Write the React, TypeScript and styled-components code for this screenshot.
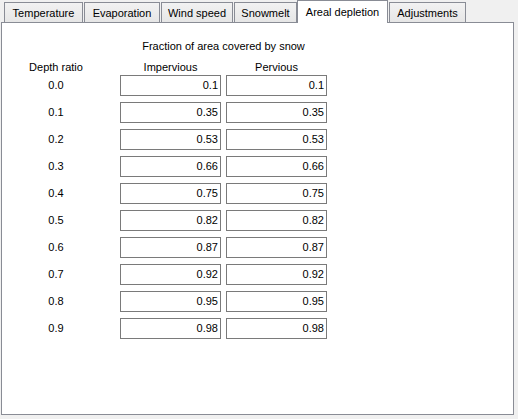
import React from 'react';
import styled, { createGlobalStyle } from 'styled-components';

const depletion = [
  { ratio: '0.0', impervious: '0.1', pervious: '0.1' },
  { ratio: '0.1', impervious: '0.35', pervious: '0.35' },
  { ratio: '0.2', impervious: '0.53', pervious: '0.53' },
  { ratio: '0.3', impervious: '0.66', pervious: '0.66' },
  { ratio: '0.4', impervious: '0.75', pervious: '0.75' },
  { ratio: '0.5', impervious: '0.82', pervious: '0.82' },
  { ratio: '0.6', impervious: '0.87', pervious: '0.87' },
  { ratio: '0.7', impervious: '0.92', pervious: '0.92' },
  { ratio: '0.8', impervious: '0.95', pervious: '0.95' },
  { ratio: '0.9', impervious: '0.98', pervious: '0.98' },
];

const tabs = [
  { label: 'Temperature', width: 79 },
  { label: 'Evaporation', width: 76 },
  { label: 'Wind speed', width: 72 },
  { label: 'Snowmelt', width: 63 },
  { label: 'Areal depletion', width: 91, active: true },
  { label: 'Adjustments', width: 77 },
];

export default function App() {
  return (
    <>
      <GlobalStyle />
      <Window>
        <TabRow>
          {tabs.map((t) => (
            <Tab key={t.label} $width={t.width} $active={!!t.active}>
              {t.label}
            </Tab>
          ))}
        </TabRow>
        <Panel>
          <Columns>
            <Title>Fraction of area covered by snow</Title>
          </Columns>
          <HeaderRow>
            <RatioLabel>Depth ratio</RatioLabel>
            <ColumnLabel>Impervious</ColumnLabel>
            <ColumnLabel>Pervious</ColumnLabel>
          </HeaderRow>
          <Rows>
            {depletion.map((row) => (
              <React.Fragment key={row.ratio}>
                <RatioLabel $boxed>{row.ratio}</RatioLabel>
                <ValueBox>{row.impervious}</ValueBox>
                <ValueBox>{row.pervious}</ValueBox>
              </React.Fragment>
            ))}
          </Rows>
        </Panel>
      </Window>
    </>
  );
}

const GlobalStyle = createGlobalStyle`
  html, body {
    margin: 0;
    padding: 0;
    background: #f0f0f0;
  }
  body {
    font-family: "Liberation Sans", Arial, sans-serif;
    font-size: 11px;
    color: #000;
  }
`;

const Window = styled.div`
  width: 518px;
  height: 419px;
  background: #f0f0f0;
`;

const TabRow = styled.div`
  position: relative;
  z-index: 1;
  display: flex;
  align-items: flex-end;
  gap: 1px;
  height: 23px;
  margin-bottom: -1px;
  padding-left: 4px;
`;

const Tab = styled.div<{ $width: number; $active: boolean }>`
  box-sizing: border-box;
  width: ${(p) => p.$width}px;
  height: ${(p) => (p.$active ? 23 : 20)}px;
  margin-bottom: ${(p) => (p.$active ? 0 : 1)}px;
  margin-left: ${(p) => (p.$active ? -1 : 0)}px;
  display: flex;
  align-items: center;
  justify-content: center;
  padding-top: ${(p) => (p.$active ? 0 : 1)}px;
  border: 1px solid #898c95;
  border-bottom: none;
  background: ${(p) =>
    p.$active ? '#ffffff' : 'linear-gradient(#f2f2f2, #e6e6e6)'};
  color: #000;
  white-space: nowrap;
`;

const Panel = styled.div`
  box-sizing: border-box;
  width: 513px;
  height: 393px;
  margin-left: 1px;
  border: 1px solid #898c95;
  background: #ffffff;
  padding: 17px 0 0 9px;
`;

const Columns = styled.div`
  display: grid;
  grid-template-columns: 104px 101px 101px;
  column-gap: 5px;
`;

const HeaderRow = styled(Columns)`
  margin: 8px 0 1px;
  line-height: 13px;
`;

const Rows = styled(Columns)`
  row-gap: 6px;
`;

const Title = styled.div`
  grid-column: 2 / 4;
  text-align: center;
  line-height: 13px;
`;

const RatioLabel = styled.div<{ $boxed?: boolean }>`
  box-sizing: border-box;
  padding-right: 14px;
  text-align: center;
  line-height: ${(p) => (p.$boxed ? 21 : 13)}px;
`;

const ColumnLabel = styled.div`
  text-align: center;
`;

const ValueBox = styled.div`
  box-sizing: border-box;
  height: 21px;
  border: 1px solid #7a7a7a;
  background: #fff;
  text-align: right;
  padding-right: 2px;
  line-height: 19px;
`;
